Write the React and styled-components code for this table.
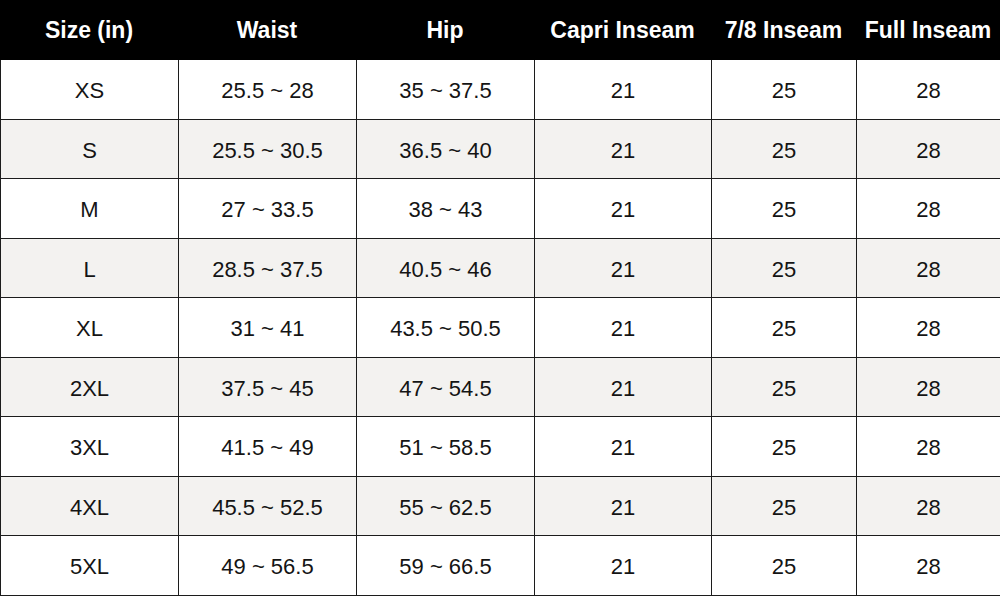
import styled, { createGlobalStyle } from 'styled-components';

const GlobalStyle = createGlobalStyle`
    html, body {
        margin: 0;
        padding: 0;
        background: #ffffff;
    }
    * {
        box-sizing: border-box;
    }
`;

const headers = ['Size (in)', 'Waist', 'Hip', 'Capri Inseam', '7/8 Inseam', 'Full Inseam'];

const rows = [
    ['XS', '25.5 ~ 28', '35 ~ 37.5'],
    ['S', '25.5 ~ 30.5', '36.5 ~ 40'],
    ['M', '27 ~ 33.5', '38 ~ 43'],
    ['L', '28.5 ~ 37.5', '40.5 ~ 46'],
    ['XL', '31 ~ 41', '43.5 ~ 50.5'],
    ['2XL', '37.5 ~ 45', '47 ~ 54.5'],
    ['3XL', '41.5 ~ 49', '51 ~ 58.5'],
    ['4XL', '45.5 ~ 52.5', '55 ~ 62.5'],
    ['5XL', '49 ~ 56.5', '59 ~ 66.5'],
];

function App() {
    return (
        <>
            <GlobalStyle />
            <Chart>
                <HeadRow>
                    {headers.map(h => (
                        <HeadCell key={h}>{h}</HeadCell>
                    ))}
                </HeadRow>
                {rows.map((r, i) => (
                    <Row key={r[0]} $shade={i % 2 === 1}>
                        <Cell>{r[0]}</Cell>
                        <Cell>{r[1]}</Cell>
                        <Cell>{r[2]}</Cell>
                        <Cell>21</Cell>
                        <Cell>25</Cell>
                        <Cell>28</Cell>
                    </Row>
                ))}
            </Chart>
        </>
    );
}

export default App;

const cols = '178px 178px 178px 177px 145px 144px';

const Chart = styled.div`
    width: 1000px;
    height: 596px;
    display: flex;
    flex-direction: column;
    font-family: 'Liberation Sans', Arial, sans-serif;
    overflow: hidden;
`;

const HeadRow = styled.div`
    display: grid;
    grid-template-columns: ${cols};
    height: 60px;
    background: #000000;
    flex-shrink: 0;
`;

const HeadCell = styled.div`
    display: flex;
    align-items: center;
    justify-content: center;
    color: #ffffff;
    font-weight: bold;
    font-size: 23px;
    white-space: nowrap;
    padding-top: 1px;
`;

const Row = styled.div`
    display: grid;
    grid-template-columns: ${cols};
    height: 59.5px;
    flex-shrink: 0;
    background: ${props => props.$shade ? '#f3f2f0' : '#ffffff'};
    border-left: 1px solid #1c1c1c;
    border-bottom: 1px solid #1c1c1c;
`;

const Cell = styled.div`
    display: flex;
    align-items: center;
    justify-content: center;
    color: #141414;
    font-size: 22px;
    border-right: 1px solid #1c1c1c;
    white-space: nowrap;
    padding-top: 4px;
`;
